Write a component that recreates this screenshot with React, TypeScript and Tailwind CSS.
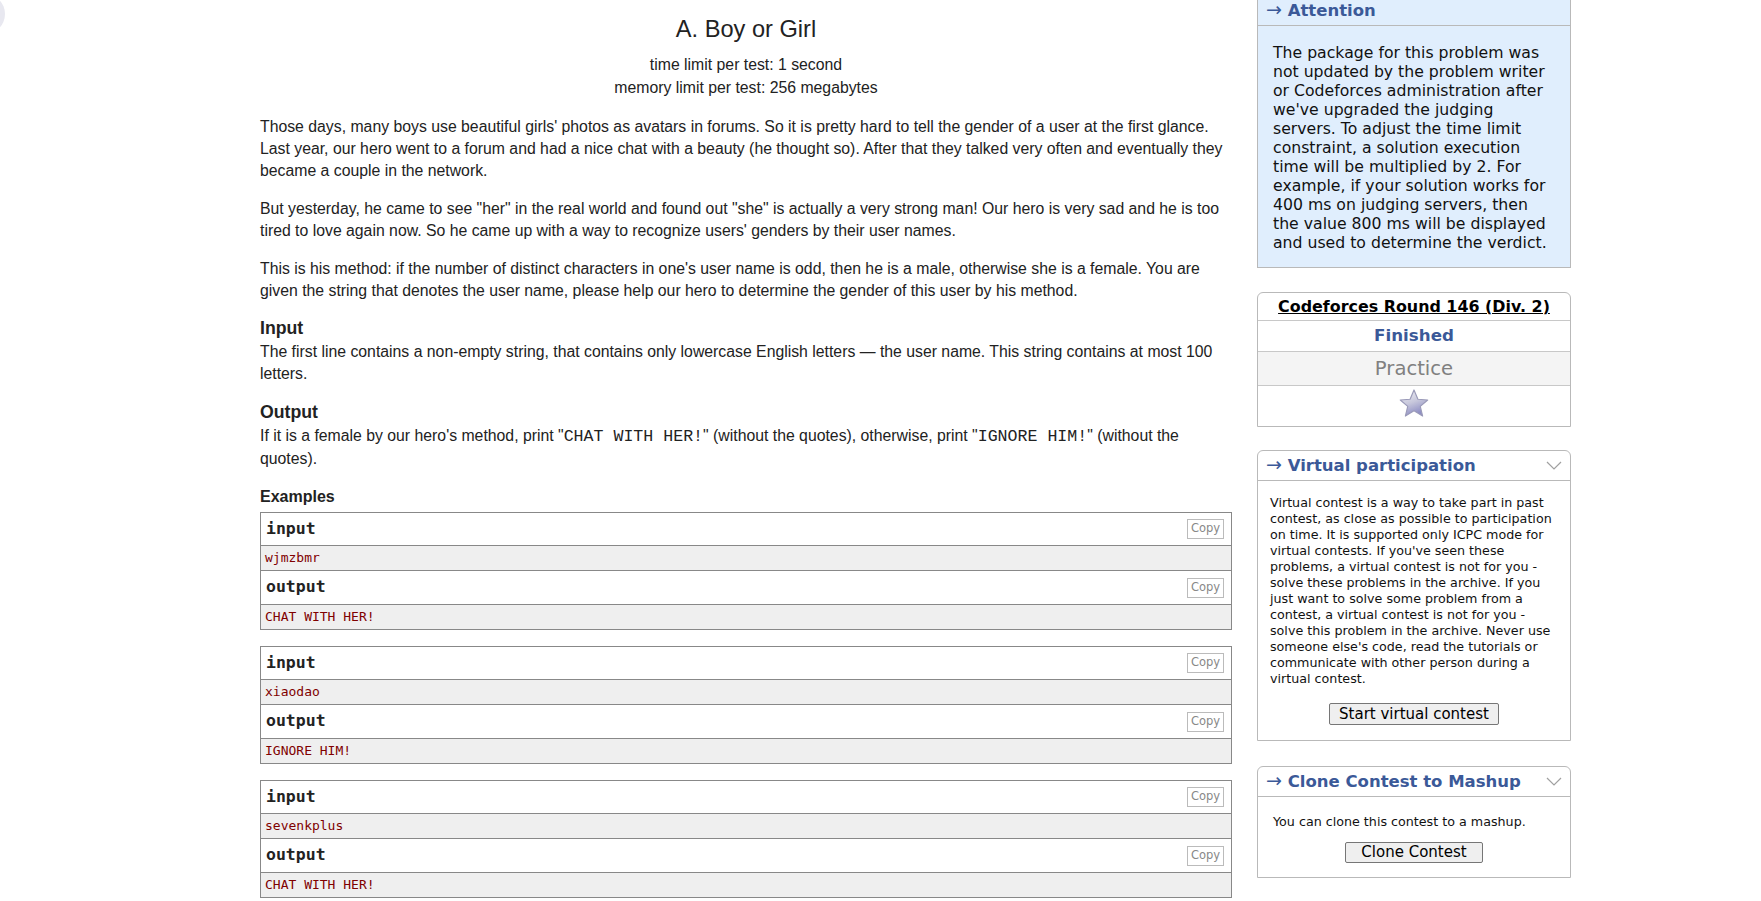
import React from 'react'

const sans = "font-['Liberation_Sans',Arial,sans-serif]"
const verdana = "font-['DejaVu_Sans',Verdana,sans-serif]"
const mono = "font-['DejaVu_Sans_Mono',Consolas,monospace]"
const courier = "font-['Liberation_Mono','Courier_New',monospace]"

const samples = [
  { input: 'wjmzbmr', output: 'CHAT WITH HER!' },
  { input: 'xiaodao', output: 'IGNORE HIM!' },
  { input: 'sevenkplus', output: 'CHAT WITH HER!' },
]

function CopyButton() {
  return (
    <span className={`mr-[7px] flex h-[20px] w-[37px] items-center justify-center border border-[#bbb] text-[11.5px] text-[#888] ${verdana}`}>
      Copy
    </span>
  )
}

function SampleTest({ input, output }: { input: string; output: string }) {
  return (
    <div className="border border-[#888]">
      {/* input */}
      <div className="flex h-[33px] items-center justify-between border-b border-[#888] bg-white pl-[5px]">
        <span className={`text-[16.5px] font-bold text-[#222] ${mono}`}>input</span>
        <CopyButton />
      </div>
      <div className={`flex h-[25px] items-center border-b border-[#888] bg-[#efefef] pl-[4px] text-[13px] text-[#800000] ${mono}`}>
        {input}
      </div>
      {/* output */}
      <div className="flex h-[34px] items-center justify-between border-b border-[#888] bg-white pl-[5px]">
        <span className={`text-[16.5px] font-bold text-[#222] ${mono}`}>output</span>
        <CopyButton />
      </div>
      <div className={`flex h-[24px] items-center bg-[#efefef] pl-[4px] text-[13px] text-[#800000] ${mono}`}>
        {output}
      </div>
    </div>
  )
}

function Arrow() {
  return <span className="text-[19px] leading-none font-normal">→</span>
}

function Chevron() {
  return (
    <svg width="16" height="9" viewBox="0 0 16 9" className="mr-[8px]">
      <path d="M1 1 L8 8 L15 1" fill="none" stroke="#a0a0a0" strokeWidth="1.2" />
    </svg>
  )
}

function Star() {
  return (
    <svg width="32" height="30" viewBox="0 0 24 23">
      <defs>
        <linearGradient id="starFill" x1="0" y1="0" x2="0.4" y2="1">
          <stop offset="0" stopColor="#f4f4f8" />
          <stop offset="0.55" stopColor="#c8c8dc" />
          <stop offset="1" stopColor="#8e8ec4" />
        </linearGradient>
      </defs>
      <polygon
        points="12,1.5 15,8.6 22.5,9.2 16.8,14.1 18.6,21.5 12,17.5 5.4,21.5 7.2,14.1 1.5,9.2 9,8.6"
        fill="url(#starFill)"
        stroke="#9a9ab8"
        strokeWidth="0.9"
        strokeLinejoin="round"
      />
    </svg>
  )
}

function SideBox({ title, children }: { title: string; children: React.ReactNode }) {
  return (
    <div className="rounded-t-[6px] border border-[#b9b9b9]">
      <div className="flex h-[30px] items-center justify-between border-b border-[#b9b9b9] pl-[8px]">
        <span className="text-[16.5px] leading-[20px] font-bold text-[#3b5998]">
          <Arrow /> {title}
        </span>
        <Chevron />
      </div>
      {children}
    </div>
  )
}

export default function App() {
  return (
    <div className="relative min-h-[901px] overflow-hidden bg-white text-[#222]">
      {/* corner blob */}
      <div className="absolute -left-[35px] -top-[6px] h-[40px] w-[40px] rounded-full bg-[#e8e8f0]" />

      <div className="flex gap-[25px] pl-[260px]">
        {/* Problem statement */}
        <main className={`flex w-[972px] flex-col ${sans}`}>
          <h1 className="pt-[15px] text-center text-[23.6px] leading-[28px] font-normal">A. Boy or Girl</h1>
          <div className="mt-[10px] text-center text-[15.8px] leading-[23px]">
            <div>time limit per test: 1 second</div>
            <div>memory limit per test: 256 megabytes</div>
          </div>

          <div className="mt-[17px] flex flex-col gap-4 text-[15.8px] leading-[22px]">
            <p>
              Those days, many boys use beautiful girls' photos as avatars in forums. So it is pretty hard to tell the gender of
              a user at the first glance. Last year, our hero went to a forum and had a nice chat with a beauty (he thought so).
              After that they talked very often and eventually they became a couple in the network.
            </p>
            <p>
              But yesterday, he came to see "her" in the real world and found out "she" is actually a very strong man! Our hero
              is very sad and he is too tired to love again now. So he came up with a way to recognize users' genders by their
              user names.
            </p>
            <p>
              This is his method: if the number of distinct characters in one's user name is odd, then he is a male, otherwise
              she is a female. You are given the string that denotes the user name, please help our hero to determine the
              gender of this user by his method.
            </p>
          </div>

          {/* Input */}
          <div className="mt-[14px]">
            <div className="text-[17.7px] leading-[24px] font-bold">Input</div>
            <p className="mt-[1px] text-[15.8px] leading-[22px]">
              The first line contains a non-empty string, that contains only lowercase English letters — the user name. This
              string contains at most 100 letters.
            </p>
          </div>

          {/* Output */}
          <div className="mt-[15px]">
            <div className="text-[17.7px] leading-[24px] font-bold">Output</div>
            <p className="mt-[1px] text-[15.8px] leading-[22px]">
              If it is a female by our hero's method, print "<span className={`text-[16.6px] ${courier}`}>CHAT WITH HER!</span>"
              (without the quotes), otherwise, print "<span className={`text-[16.6px] ${courier}`}>IGNORE HIM!</span>" (without
              the quotes).
            </p>
          </div>

          {/* Examples */}
          <div className="mt-[15px] text-[16px] leading-[24px] font-bold">Examples</div>
          <div className="mt-[3px] flex flex-col gap-4">
            {samples.map((s, i) => (
              <SampleTest key={i} input={s.input} output={s.output} />
            ))}
          </div>
        </main>

        {/* Sidebar */}
        <aside className={`flex w-[314px] flex-col ${verdana}`}>
          {/* Attention */}
          <div className="-mt-[6px] border border-[#b9b9b9] bg-[#e0eefd]">
            <div className="flex h-[31px] items-center border-b border-[#b9b9b9] pl-[8px] text-[16.5px] leading-[20px] font-bold text-[#3b5998]">
              <span>
                <Arrow /> Attention
              </span>
            </div>
            <p className="pt-[17px] pr-[14px] pb-[15px] pl-[15px] text-[15.7px] leading-[19px] text-[#111]">
              The package for this problem was not updated by the problem writer or Codeforces administration after we've
              upgraded the judging servers. To adjust the time limit constraint, a solution execution time will be multiplied
              by 2. For example, if your solution works for 400 ms on judging servers, then the value 800 ms will be displayed
              and used to determine the verdict.
            </p>
          </div>

          {/* Contest */}
          <div className="mt-[24px] rounded-t-[6px] border border-[#b9b9b9] text-center">
            <div className="flex h-[28px] items-center justify-center border-b border-[#c8c8c8]">
              <span className="text-[15.9px] font-bold text-black underline">Codeforces Round 146 (Div. 2)</span>
            </div>
            <div className="flex h-[31px] items-center justify-center border-b border-[#c8c8c8] text-[16.7px] font-bold text-[#3b5998]">
              Finished
            </div>
            <div className="flex h-[34px] items-center justify-center border-b border-[#c8c8c8] bg-[#f4f4f4] text-[19.6px] text-[#808080]">
              Practice
            </div>
            <div className="flex h-[40px] items-center justify-center pb-[6px]">
              <Star />
            </div>
          </div>

          {/* Virtual participation */}
          <div className="mt-[23px]">
            <SideBox title="Virtual participation">
              <div className="flex flex-col items-center pt-[14px] pr-[12px] pb-[15px] pl-[12px]">
                <p className="text-[12.7px] leading-[16px] text-[#111]">
                  Virtual contest is a way to take part in past contest, as close as possible to participation on time. It is
                  supported only ICPC mode for virtual contests. If you've seen these problems, a virtual contest is not for you
                  - solve these problems in the archive. If you just want to solve some problem from a contest, a virtual contest
                  is not for you - solve this problem in the archive. Never use someone else's code, read the tutorials or
                  communicate with other person during a virtual contest.
                </p>
                <button className="mt-[16px] h-[22px] w-[170px] rounded-[2px] border border-[#767676] bg-[#efefef] text-[15px] leading-[20px] text-black">
                  Start virtual contest
                </button>
              </div>
            </SideBox>
          </div>

          {/* Clone */}
          <div className="mt-[25px]">
            <SideBox title="Clone Contest to Mashup">
              <div className="flex flex-col items-center px-[15px] pt-[17px] pb-[14px]">
                <p className="self-start text-[12.7px] leading-[16px] text-[#111]">You can clone this contest to a mashup.</p>
                <button className="mt-[12px] h-[21px] w-[138px] rounded-[2px] border border-[#767676] bg-[#efefef] text-[15px] leading-[19px] text-black">
                  Clone Contest
                </button>
              </div>
            </SideBox>
          </div>
        </aside>
      </div>
    </div>
  )
}
